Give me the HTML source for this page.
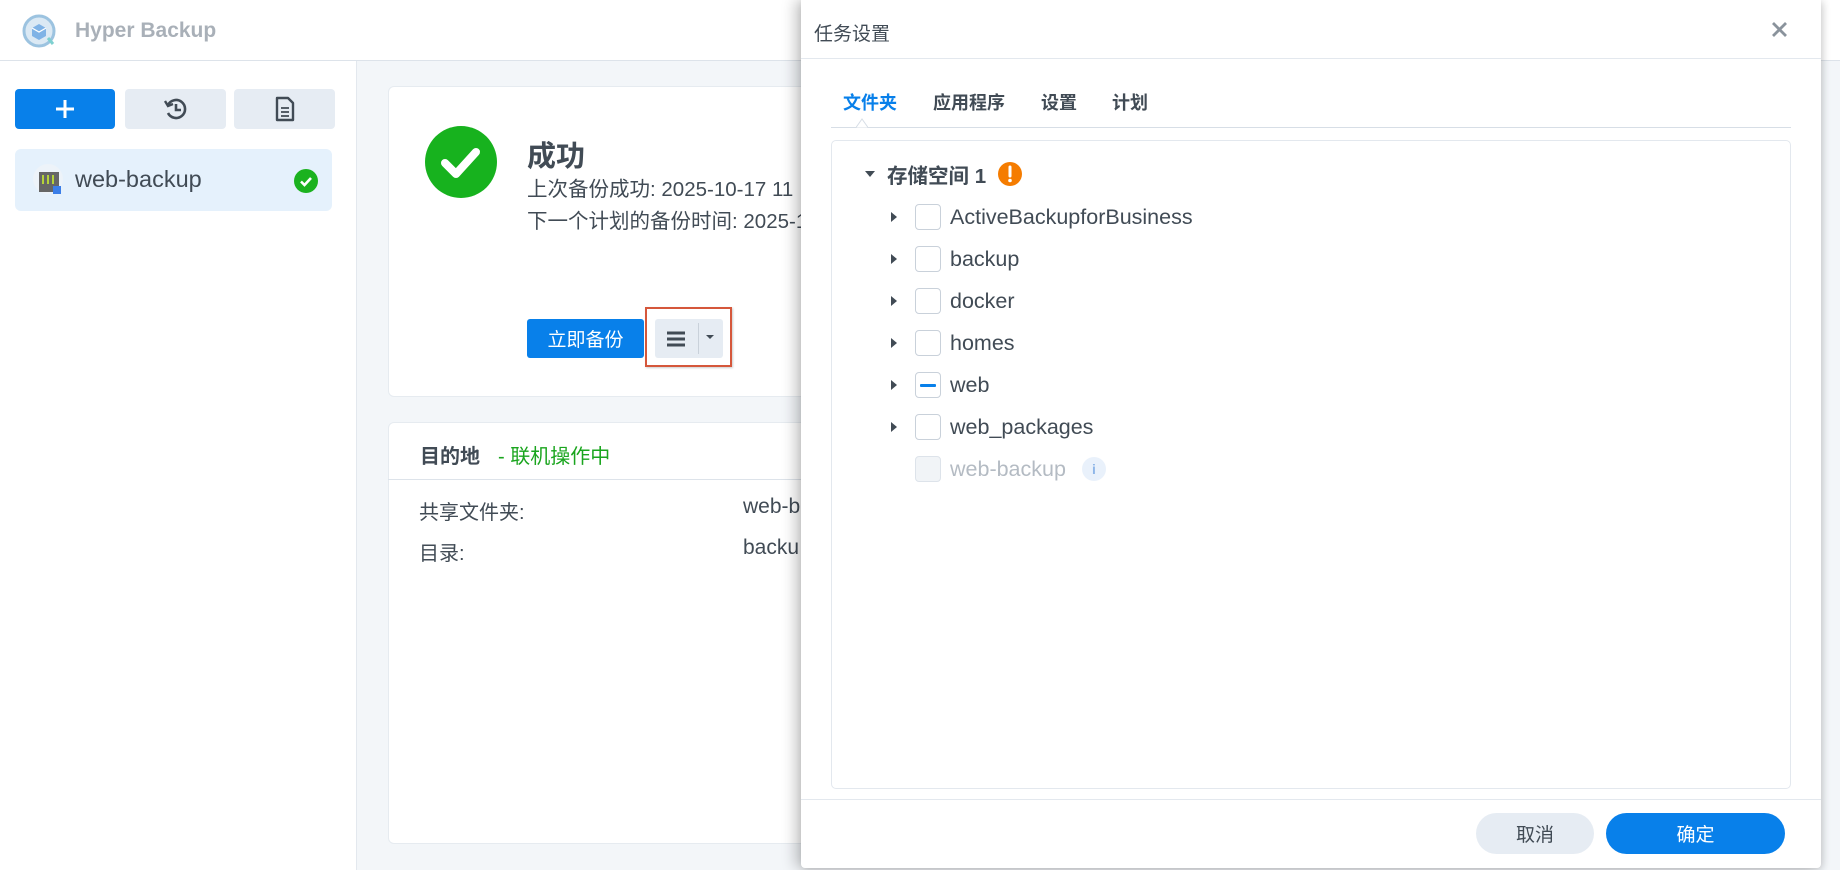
<!DOCTYPE html>
<html><head><meta charset="utf-8">
<style>
*{box-sizing:border-box;margin:0;padding:0}
body{width:1840px;height:870px;overflow:hidden;background:#f3f6f9;font-family:"Liberation Sans","Noto Sans CJK SC",sans-serif;color:#414b55;position:relative}
.abs{position:absolute}
.hdr{left:0;top:0;width:1840px;height:61px;background:#fff;border-bottom:1px solid #dde3ea}
.side{left:0;top:61px;width:357px;height:809px;background:#fff;border-right:1px solid #e3e8ee}
.btn{top:89px;height:40px;border-radius:4px;background:#e6ecf3;display:flex;align-items:center;justify-content:center}
.card{background:#fff;border:1px solid #e6ebf0;border-radius:6px}
.dlg{left:801px;top:0;width:1020px;height:868px;background:#fff;border-radius:0 0 4px 4px;box-shadow:-6px 0 14px rgba(0,0,0,.22),2px 2px 8px rgba(0,0,0,.15)}
.row{position:absolute;left:0;height:30px;display:flex;align-items:center;font-size:21.5px;color:#414b55}
.arr{width:0;height:0;border-top:5px solid transparent;border-bottom:5px solid transparent;border-left:6px solid #414b55;margin-left:59px;margin-right:18px}
.cb{width:26px;height:26px;border:1px solid #c9d1da;border-radius:4px;margin-right:9px;background:#fff}
</style></head><body>
<div class="abs hdr"></div>
<svg class="abs" style="left:22px;top:14px" width="34" height="34" viewBox="0 0 34 34"><circle cx="17" cy="17" r="15" fill="#dbe9f4" stroke="#9cc3e0" stroke-width="3"/><path d="M10 14l7-4 7 4v8l-7 4-7-4z" fill="#7fb3e6"/><path d="M10 14l7 4 7-4" stroke="#fff" fill="none" stroke-width="1.2"/><path d="M26 24l5 6" stroke="#7ed0d0" stroke-width="3"/></svg>
<div class="abs" style="left:75px;top:19px;font-size:21px;font-weight:bold;color:#a9b0b8">Hyper Backup</div>
<div class="abs side"></div>
<div class="abs btn" style="left:15px;width:100px;background:#0880ea"><svg width="22" height="22"><path d="M11 2v18M2 11h18" stroke="#fff" stroke-width="3"/></svg></div>
<div class="abs btn" style="left:125px;width:101px"><svg width="26" height="26" viewBox="0 0 26 26"><path d="M5 9A9 9 0 1 1 5 17" fill="none" stroke="#414b55" stroke-width="2.6"/><path d="M2 5l3 5 5-2" fill="none" stroke="#414b55" stroke-width="2.4"/><path d="M13 8v6h5" fill="none" stroke="#414b55" stroke-width="2.6"/></svg></div>
<div class="abs btn" style="left:234px;width:101px"><svg width="22" height="26" viewBox="0 0 22 26"><path d="M3 2h11l5 5v17H3z" fill="none" stroke="#414b55" stroke-width="2.4" stroke-linejoin="round"/><path d="M7 12h8M7 16h8M7 20h8" stroke="#414b55" stroke-width="1.8"/></svg></div>
<div class="abs" style="left:15px;top:149px;width:317px;height:62px;background:#e5f1fc;border-radius:6px"></div>
<svg class="abs" style="left:33px;top:163px" width="32" height="32" viewBox="0 0 32 32"><circle cx="15" cy="16" r="15" fill="#edf3f9"/><rect x="6" y="9" width="20" height="20" fill="#666"/><path d="M10 12v9M15 12v9M20 12v9" stroke="#b5d33a" stroke-width="2"/><rect x="20" y="23" width="8" height="8" fill="#3b7ee8"/></svg>
<div class="abs" style="left:75px;top:166px;font-size:23.5px;color:#414b55">web-backup</div>
<svg class="abs" style="left:294px;top:169px" width="24" height="24"><circle cx="12" cy="12" r="12" fill="#1bb21f"/><path d="M7 12.5l3.5 3.5 6.5-7" stroke="#fff" stroke-width="2.6" fill="none"/></svg>

<div class="abs card" style="left:388px;top:86px;width:470px;height:311px"></div>
<svg class="abs" style="left:425px;top:126px" width="72" height="72"><circle cx="36" cy="36" r="36" fill="#17b21e"/><path d="M20 37l11 11 20-22" stroke="#fff" stroke-width="8" stroke-linecap="round" stroke-linejoin="round" fill="none"/></svg>
<div class="abs" style="left:527px;top:133px;font-size:29px;font-weight:bold;color:#414b55">成功</div>
<div class="abs" style="left:527px;top:172px;font-size:20.5px;white-space:nowrap">上次备份成功: 2025-10-17 11</div>
<div class="abs" style="left:527px;top:204px;font-size:20.5px;white-space:nowrap">下一个计划的备份时间: 2025-1</div>
<div class="abs" style="left:527px;top:319px;width:117px;height:39px;background:#0880ea;border-radius:3px;color:#fff;font-size:19px;display:flex;align-items:center;justify-content:center">立即备份</div>
<div class="abs" style="left:645px;top:307px;width:87px;height:60px;border:2px solid #d5573b;box-shadow:1px 1px 2px rgba(0,0,0,.2)"></div>
<div class="abs" style="left:655px;top:319px;width:68px;height:39px;background:#e6ecf3;border-radius:3px"></div>
<svg class="abs" style="left:666px;top:329px" width="20" height="20"><path d="M1 4h18M1 10h18M1 16h18" stroke="#414b55" stroke-width="3"/></svg>
<div class="abs" style="left:698px;top:323px;width:1px;height:31px;background:#c9d1da"></div>
<div class="abs" style="left:706px;top:335px;border-left:4px solid transparent;border-right:4px solid transparent;border-top:4px solid #414b55"></div>

<div class="abs card" style="left:388px;top:422px;width:470px;height:422px"></div>
<div class="abs" style="left:388px;top:479px;width:430px;height:1px;background:#dde3ea"></div>
<div class="abs" style="left:420px;top:440px;font-size:20px;font-weight:bold">目的地</div>
<div class="abs" style="left:498px;top:440px;font-size:20px;color:#1aa51e">- 联机操作中</div>
<div class="abs" style="left:419px;top:496px;font-size:20px">共享文件夹:</div>
<div class="abs" style="left:419px;top:537px;font-size:20px">目录:</div>
<div class="abs" style="left:743px;top:495px;font-size:21px">web-b</div>
<div class="abs" style="left:743px;top:536px;font-size:21px">backu</div>

<div class="abs dlg">
  <div class="abs" style="left:13px;top:19px;font-size:19px;color:#414b55">任务设置</div>
  <svg class="abs" style="left:970px;top:21px" width="17" height="17"><path d="M2 2l13 13M15 2L2 15" stroke="#8a939c" stroke-width="2.8"/></svg>
  <div class="abs" style="left:0;top:58px;width:1020px;height:1px;background:#e3e8ee"></div>
  <div class="abs" style="left:42px;top:89px;font-size:18px;font-weight:bold;color:#0880ea">文件夹</div>
  <div class="abs" style="left:132px;top:89px;font-size:18px;font-weight:bold;color:#414b55">应用程序</div>
  <div class="abs" style="left:240px;top:89px;font-size:18px;font-weight:bold;color:#414b55">设置</div>
  <div class="abs" style="left:311px;top:89px;font-size:18px;font-weight:bold;color:#414b55">计划</div>
  <div class="abs" style="left:30px;top:127px;width:960px;height:1px;background:#d7dee6"></div>
  <svg class="abs" style="left:55px;top:118px" width="12" height="10"><path d="M0 9.5L6 1l6 8.5" fill="#fff" stroke="#d7dee6"/></svg>
  <div class="abs" style="left:30px;top:140px;width:960px;height:649px;border:1px solid #e3e8ee;border-radius:5px">
    <div class="abs" style="left:0;top:18px;height:30px;display:flex;align-items:center;font-size:20.5px;font-weight:bold">
      <div style="margin-left:33px;margin-right:12px;border-left:5px solid transparent;border-right:5px solid transparent;border-top:6px solid #414b55"></div>存储空间 1
      <svg style="margin-left:12px" width="24" height="24"><circle cx="12" cy="12" r="12" fill="#f57c00"/><path d="M12 5v9" stroke="#fff" stroke-width="3" stroke-linecap="round"/><circle cx="12" cy="18.5" r="1.8" fill="#fff"/></svg>
    </div>
    <div class="row" style="top:61px"><div class="arr"></div><div class="cb"></div>ActiveBackupforBusiness</div>
    <div class="row" style="top:103px"><div class="arr"></div><div class="cb"></div>backup</div>
    <div class="row" style="top:145px"><div class="arr"></div><div class="cb"></div>docker</div>
    <div class="row" style="top:187px"><div class="arr"></div><div class="cb"></div>homes</div>
    <div class="row" style="top:229px"><div class="arr"></div><div class="cb" style="position:relative"><div style="position:absolute;left:4px;top:11px;width:16px;height:3px;background:#0880ea;border-radius:1px"></div></div>web</div>
    <div class="row" style="top:271px"><div class="arr"></div><div class="cb"></div>web_packages</div>
    <div class="row" style="top:313px;color:#b4bbc3"><div style="width:83px"></div><div class="cb" style="background:#f1f4f7;border-color:#dde3ea"></div>web-backup<div style="margin-left:16px;width:24px;height:24px;border-radius:12px;background:#e9f1fb;color:#8fb6e8;font-size:14px;font-weight:bold;display:flex;align-items:center;justify-content:center">i</div></div>
  </div>
  <div class="abs" style="left:0;top:799px;width:1020px;height:1px;background:#e3e8ee"></div>
  <div class="abs" style="left:675px;top:813px;width:118px;height:41px;border-radius:21px;background:#e6ecf3;font-size:19px;color:#414b55;display:flex;align-items:center;justify-content:center">取消</div>
  <div class="abs" style="left:805px;top:813px;width:179px;height:41px;border-radius:21px;background:#0880ea;font-size:19px;color:#fff;display:flex;align-items:center;justify-content:center">确定</div>
</div>
</body></html>
